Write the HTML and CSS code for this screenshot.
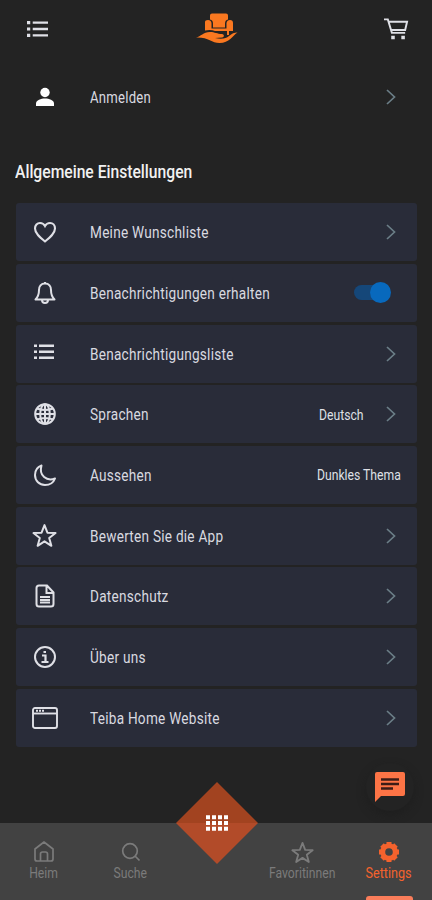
FILE: index.html
```html
<!DOCTYPE html>
<html lang="de">
<head>
<meta charset="utf-8">
<meta name="viewport" content="width=device-width, initial-scale=1">
<title>Einstellungen</title>
<link rel="stylesheet" href="styles.css">
</head>
<body>
<svg width="0" height="0" class="defs">
  <symbol id="chev" viewBox="0 0 12 18"><path d="M2 2l7.500 7L2 16" fill="none" stroke="currentColor" stroke-width="1.700"/></symbol>
  <symbol id="star" viewBox="0 0 24 24"><path d="M12 2l2.800 7.300 7.800.3-6.100 4.800 2.100 7.500-6.600-4.300-6.600 4.300 2.100-7.500-6.100-4.800 7.800-.3z" fill="none" stroke="currentColor" stroke-width="1.900" stroke-linejoin="round"/></symbol>
</svg>
<div class="app">
  <header class="top">
    <svg class="menu" viewBox="0 0 22 18" fill="currentColor"><path d="M0 .7h3.400v3.400H0zM6 1.200h16v2.400H6zM0 7.300h3.400v3.400H0zM6 7.800h16v2.400H6zM0 13.900h3.400v3.400H0zM6 14.400h16v2.400H6z"/></svg>
    <svg class="logo" viewBox="0 0 42 32" fill="#fa7820"><path d="M14 2.500Q14 .5 16 .5h14q2 0 2 2v4q-3 .5-3 4v4H17v-4q0-3.500-3-4z"/><path d="M9 9q0-2 3-2t3.500 3v5.500h15V10q.5-3 3.500-3t3 3v8h-4v4h-2v-4H19q-4-1.500-10-.5z"/><path d="M0 24.500c5-1 7-5.500 14-5.500 5 0 7 2 12 2 2 0 3 3 0 3.500l-7 .5c7 1.500 11 .5 14-2s5-3.500 8.500-3.500c-5 3-8 10.500-18 10.500-8 0-11-6-23.500-5.500z"/></svg>
    <svg class="cart" viewBox="0 0 26 24" fill="none" stroke="currentColor" stroke-width="2"><path d="M0 2h4l4.200 14H22M5 4.500h19L22 13H7.500"/><path d="M7.500 19h3.700v3.700H7.500zM18 19h3.700v3.700H18z" fill="currentColor" stroke="none"/></svg>
  </header>
  <a class="row login">
    <span class="ic"><svg width="20" height="20" viewBox="0 0 20 20" fill="currentColor"><circle cx="10" cy="5.500" r="4.700"/><path d="M1 19v-2.500C1 13 6 11.500 10 11.500s9 1.500 9 5V19z"/></svg></span>
    <span class="label"><b class="t">Anmelden</b></span><svg class="chev"><use href="#chev"/></svg>
  </a>
  <h1><span class="t">Allgemeine Einstellungen</span></h1>
  <main class="list">
    <a class="row"><span class="ic"><svg width="24" height="22" viewBox="0 0 24 22" fill="none" stroke="currentColor" stroke-width="2.100"><path d="M12 20.500C7 16.500 2 12.500 2 7.500 2 4.300 4.200 2 7 2c2.200 0 4 1.200 5 3 1-1.800 2.800-3 5-3 2.800 0 5 2.300 5 5.500 0 5-5 9-10 13z"/></svg></span><span class="label"><b class="t">Meine Wunschliste</b></span><svg class="chev"><use href="#chev"/></svg></a>
    <a class="row"><span class="ic"><svg width="24" height="24" viewBox="0 0 24 24" fill="none" stroke="currentColor" stroke-width="2" stroke-linejoin="round"><path d="M12 2.500C8 2.500 6 5.500 6 9c0 5-1 7-3.500 9.500h19C19 16 18 14 18 9c0-3.500-2-6.500-6-6.500zM9 19c0 4 6 4 6 0M12 1v2"/></svg></span><span class="label"><b class="t">Benachrichtigungen erhalten</b></span><span class="switch"></span></a>
    <a class="row"><span class="ic"><svg class="list-icon" width="20" height="16" viewBox="0 0 20 16" fill="currentColor"><path d="M0 .5h3v2.500H0zM5 .5h15v2.500H5zM0 6.500h3v2.500H0zM5 6.500h15v2.500H5zM0 12.500h3V15H0zM5 12.500h15V15H5z"/></svg></span><span class="label"><b class="t">Benachrichtigungsliste</b></span><svg class="chev"><use href="#chev"/></svg></a>
    <a class="row"><span class="ic"><svg width="22" height="22" viewBox="0 0 22 22" fill="none" stroke="currentColor" stroke-width="2"><circle cx="11" cy="11" r="9.800"/><ellipse cx="11" cy="11" rx="4.800" ry="9.800"/><path d="M11 1v20M1 11h20M3 5.500q8 3 16 0M3 16.500q8-3 16 0"/></svg></span><span class="label"><b class="t">Sprachen</b></span><span class="value gap"><b class="t">Deutsch</b></span><svg class="chev"><use href="#chev"/></svg></a>
    <a class="row"><span class="ic"><svg width="24" height="24" viewBox="0 0 24 24" fill="none" stroke="currentColor" stroke-width="2" stroke-linejoin="round"><path d="M8.500 2.500C4.500 4 2 7.500 2 12c0 6 4.500 10 10 10 4.500 0 8.500-2.500 10-6.500C14 18.500 5.500 13 8.500 2.500z"/></svg></span><span class="label"><b class="t">Aussehen</b></span><span class="value"><b class="t">Dunkles Thema</b></span></a>
    <a class="row"><span class="ic"><svg width="25" height="25"><use href="#star"/></svg></span><span class="label"><b class="t">Bewerten Sie die App</b></span><svg class="chev"><use href="#chev"/></svg></a>
    <a class="row"><span class="ic"><svg width="20" height="24" viewBox="0 0 20 24" fill="none" stroke="currentColor" stroke-width="2"><path d="M4 1.500h8l6.500 7V20q0 2.500-2.500 2.500H4Q1.500 22.500 1.500 20V4Q1.500 1.500 4 1.500zM11.500 2v7H18M5 13h10M5 16h10M5 18.500h10"/></svg></span><span class="label"><b class="t">Datenschutz</b></span><svg class="chev"><use href="#chev"/></svg></a>
    <a class="row"><span class="ic"><svg width="24" height="24" viewBox="0 0 24 24" fill="none" stroke="currentColor" stroke-width="2"><circle cx="12" cy="12" r="10"/><path d="M9 10.500h3.500V17M8.500 17h7M10.500 7h2.500" stroke-width="2.200"/></svg></span><span class="label"><b class="t">Über uns</b></span><svg class="chev"><use href="#chev"/></svg></a>
    <a class="row"><span class="ic"><svg width="26" height="22" viewBox="0 0 26 22" fill="none" stroke="currentColor" stroke-width="1.900"><rect x="1" y="1" width="24" height="20" rx="2"/><path d="M1 6.500h24"/><path d="M4 3.800h8" stroke-dasharray="2 1"/></svg></span><span class="label"><b class="t">Teiba Home Website</b></span><svg class="chev"><use href="#chev"/></svg></a>
  </main>
  <button class="chat" aria-label="Chat"><svg width="32" height="32" viewBox="0 0 32 32"><path d="M3 1h26q2 0 2 2v20q0 2-2 2H7l-6 6V3q0-2 2-2z" fill="#fd7446"/><path d="M7 8.500h18M7 13h18M7 17.500h12" stroke="#3c1c17" stroke-width="2.400"/></svg></button>
  <nav class="tabs">
    <a class="tab home"><svg width="20" height="21" viewBox="0 0 20 21" fill="none" stroke="currentColor" stroke-width="1.700" stroke-linejoin="round"><path d="M1 8l9-7 9 7v10q0 2-2 2H3q-2 0-2-2zM6.500 20v-7q0-2 2-2h3q2 0 2 2v7"/></svg><b class="t">Heim</b></a>
    <a class="tab search"><svg width="20" height="21" viewBox="0 0 20 21" fill="none" stroke="currentColor" stroke-width="1.700"><circle cx="9" cy="10" r="7.300"/><path d="M14 15l4.500 4.500"/></svg><b class="t">Suche</b></a>
    <a class="tab fav"><svg width="23" height="23"><use href="#star"/></svg><b class="t">Favoritinnen</b></a>
    <a class="tab settings"><svg width="22" height="22" viewBox="0 0 22 22"><circle cx="11" cy="11" r="6.300" fill="none" stroke="currentColor" stroke-width="5"/><g stroke="currentColor" stroke-width="5" stroke-linecap="butt"><path d="M11 1v4M11 17v4M1 11h4M17 11h4M4 4l3 3M15 15l3 3M4 18l3-3M15 7l3-3"/></g></svg><b class="t">Settings</b></a>
    <svg class="diamond" viewBox="0 0 82 82"><path d="M41 0l41 41H0z" fill="#a24320"/><path d="M0 41h82L41 82z" fill="#b24b29"/><path d="M30 35.300h22M30 41h22M30 46.700h22" stroke="#fff" stroke-width="4" stroke-dasharray="4 2"/></svg>
    <i class="indicator"></i>
  </nav>
</div>
</body>
</html>
```
FILE: styles.css
```css
* { box-sizing: border-box; }
body { margin: 0; background: #232323; color: #dfe0e6; font-family: Roboto, "Liberation Sans", sans-serif; }
.defs { position: absolute; }
.app { position: relative; width: 432px; height: 900px; overflow: hidden; display: flex; flex-direction: column; }
.top { height: 58px; flex: none; display: flex; justify-content: space-between; align-items: center; padding: 0 23px 0 27px; }
.menu { width: 21px; height: 18px; }
.logo { width: 42px; height: 32px; margin-left: 2px; }
.cart { width: 25px; height: 24px; }
.t { display: inline-block; font-weight: 400; white-space: nowrap; transform: scaleX(.87); transform-origin: left; }
.row { height: 58px; flex: none; display: flex; align-items: center; padding-right: 20px; background: #292c39; border-radius: 3px; }
.login { margin: 10px 15px 0 16px; background: none; color: #fff; }
.ic { width: 57px; display: flex; justify-content: center; flex: none; margin-right: 17px; }
.list-icon { margin: -3px 2px 0 0; }
.label { flex: 1; font-size: 16px; letter-spacing: .3px; color: #d9dae0; padding-top: 1px; }
.label .t { transform: scaleX(.85); }
.login .t { transform: scaleX(.82); }
.value { font-size: 14px; width: 46px; padding-top: 1px; }
.value:not(.gap) { width: 84px; margin-right: -4px; }
.gap { margin-right: 20px; }
.chev { width: 12px; height: 18px; color: #6b7e87; }
h1 { margin: 34px 15px 0; height: 43.200px; line-height: 24px; font-size: 18px; font-weight: 500; color: #f1f1f1; }
h1 .t { font-weight: 500; }
.list { display: flex; flex-direction: column; gap: 2.700px; margin: 0 15px 0 16px; }
.switch { width: 37px; height: 20px; margin-right: 6px; display: flex; align-items: center; justify-content: flex-end; background: linear-gradient(#154779, #154779) left center / 30px 15px no-repeat; border-radius: 8px; }
.switch { position: relative; background: none; }
.switch::before { content: ""; width: 30px; height: 15px; border-radius: 8px; background: #154779; flex: none; margin-right: -14px; }
.switch::after { content: ""; width: 21px; height: 21px; border-radius: 50%; background: #0869bd; flex: none; }
.chat { position: absolute; left: 366px; top: 763px; width: 48px; height: 48px; padding: 0; border: 0; border-radius: 50%; background: none; box-shadow: 0 4px 8px #1b1b1b88; display: grid; place-items: center; }
.tabs { position: absolute; left: 0; right: 0; bottom: 0; height: 77px; background: #424242; display: grid; grid-template-columns: 87px 87px 85px 87px 86px; color: #7b7b7b; }
.tab { display: flex; flex-direction: column; align-items: center; justify-content: space-between; height: 41px; margin-top: 18px; font-size: 14px; line-height: 17px; }
.tab .t { transform-origin: center; }
.fav { grid-column: 4; }
.settings { color: #f4622d; }
.settings .t { transform: scaleX(.9); }
.diamond { position: absolute; left: 176px; top: -41px; width: 82px; height: 82px; }
.indicator { position: absolute; left: 366px; bottom: 0; width: 47px; height: 4px; background: #fa7d5a; border-radius: 3px 3px 0 0; }
```
